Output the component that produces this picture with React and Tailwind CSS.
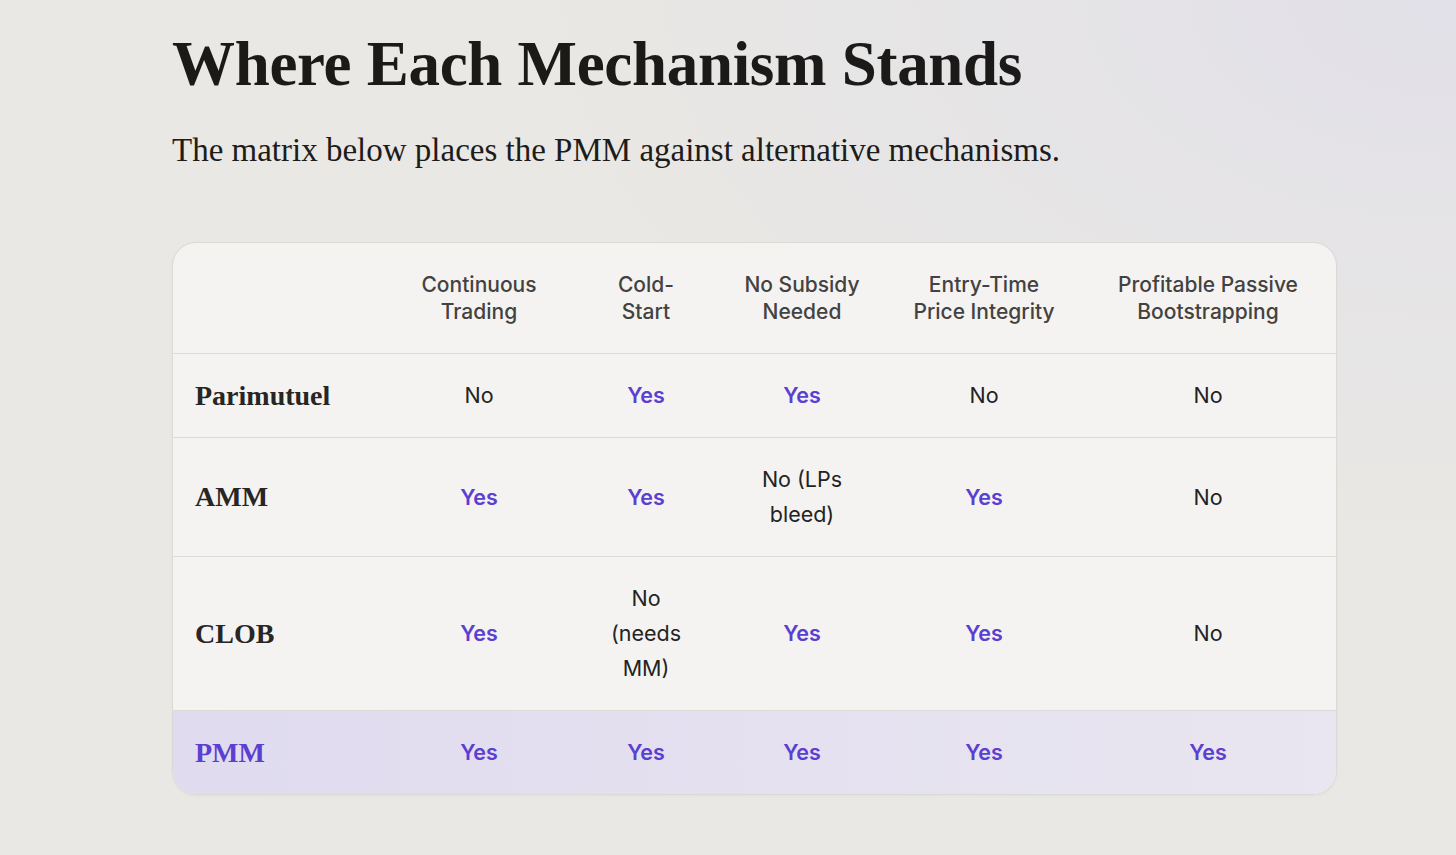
const columns = [
  ['Continuous', 'Trading'],
  ['Cold-', 'Start'],
  ['No Subsidy', 'Needed'],
  ['Entry-Time', 'Price Integrity'],
  ['Profitable Passive', 'Bootstrapping'],
]

const rows = [
  { name: 'Parimutuel', cells: [['No'], ['Yes'], ['Yes'], ['No'], ['No']] },
  { name: 'AMM', cells: [['Yes'], ['Yes'], ['No (LPs', 'bleed)'], ['Yes'], ['No']] },
  { name: 'CLOB', cells: [['Yes'], ['No', '(needs', 'MM)'], ['Yes'], ['Yes'], ['No']] },
  { name: 'PMM', cells: [['Yes'], ['Yes'], ['Yes'], ['Yes'], ['Yes']], highlight: true },
]

const grid = 'grid grid-cols-[209px_194px_140px_172px_192px_1fr]'

function Cell({ lines }) {
  const yes = lines[0] === 'Yes'
  return (
    <div
      className={
        'flex items-center justify-center px-[16px] py-[24px] text-center text-[21.5px] leading-[35px] ' +
        (yes ? 'font-semibold text-[#5b3fd1]' : 'text-[#232323]')
      }
    >
      <span>
        {lines.map((l, i) => (
          <span key={i} className="block">
            {l}
          </span>
        ))}
      </span>
    </div>
  )
}

export default function App() {
  return (
    <div className="min-h-[855px] bg-[#e9e8e4] bg-[radial-gradient(ellipse_at_top_right,#e2e0e8_0%,transparent_45%)] font-['Inter',sans-serif]">
      <div className="pl-[172px] pt-[24px] pr-[119px] pb-[60px]">
        {/* Heading */}
        <h1 className="font-['Liberation_Serif',serif] text-[63px] font-bold leading-[80px] tracking-[-0.3px] text-[#1b1a18]">
          Where Each Mechanism Stands
        </h1>
        <p className="mt-[26px] font-['Liberation_Serif',serif] text-[33px] leading-[40px] text-[#1d1c1a]">
          The matrix below places the PMM against alternative mechanisms.
        </p>

        {/* Matrix */}
        <div className="mt-[72px] overflow-hidden rounded-[24px] border border-[#dcdad5] bg-[#f4f3f1] shadow-[0_1px_3px_rgba(0,0,0,0.04)]">
          <div className={grid}>
            <div />
            {columns.map((c, i) => (
              <div
                key={i}
                className="flex items-center justify-center px-[6px] py-[28px] text-center text-[21px] font-medium leading-[27px] text-[#434240]"
              >
                <span>
                  <span className="block">{c[0]}</span>
                  <span className="block">{c[1]}</span>
                </span>
              </div>
            ))}
          </div>

          {rows.map((r) => (
            <div
              key={r.name}
              className={
                grid +
                ' border-t border-[#dddbd7] ' +
                (r.highlight ? 'bg-gradient-to-r from-[#e0dbef] to-[#e9e6f1] border-[#d8d3e6]' : '')
              }
            >
              <div
                className={
                  "flex items-center pl-[22px] font-['Liberation_Serif',serif] text-[28px] font-bold " +
                  (r.highlight ? 'text-[#5b3fd1]' : 'text-[#272624]')
                }
              >
                {r.name}
              </div>
              {r.cells.map((lines, i) => (
                <Cell key={i} lines={lines} />
              ))}
            </div>
          ))}
        </div>
      </div>
    </div>
  )
}
